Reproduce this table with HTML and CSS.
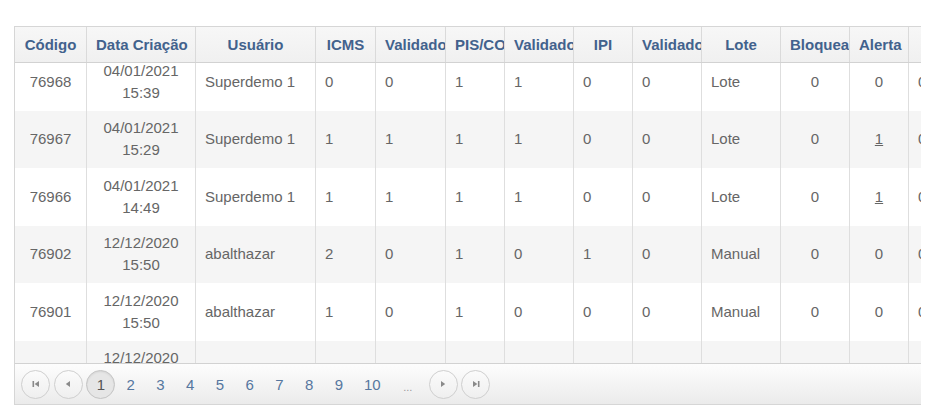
FILE: index.html
```html
<!DOCTYPE html>
<html lang="pt-BR">
<head>
<meta charset="utf-8">
<title>Grid</title>
<link rel="stylesheet" href="styles.css">
</head>
<body>
<div class="grid">
  <div class="grid-header">
    <table class="tbl">
      <colgroup>
        <col class="c1"><col class="c2"><col class="c3"><col class="c4"><col class="c5"><col class="c6"><col class="c7"><col class="c8"><col class="c9"><col class="c10"><col class="c11"><col class="c12"><col class="c13">
      </colgroup>
      <thead>
        <tr>
          <th>Código</th><th>Data Criação</th><th>Usuário</th><th>ICMS</th><th>Validado</th><th>PIS/COFINS</th><th>Validado</th><th>IPI</th><th>Validado</th><th>Lote</th><th>Bloqueado</th><th>Alerta</th><th></th>
        </tr>
      </thead>
    </table>
  </div>
  <div class="grid-content">
    <table class="tbl body">
      <colgroup>
        <col class="c1"><col class="c2"><col class="c3"><col class="c4"><col class="c5"><col class="c6"><col class="c7"><col class="c8"><col class="c9"><col class="c10"><col class="c11"><col class="c12"><col class="c13">
      </colgroup>
      <tbody>
        <tr>
          <td class="ctr">76968</td><td class="ctr">04/01/2021<br>15:39</td><td>Superdemo 1</td><td>0</td><td>0</td><td>1</td><td>1</td><td>0</td><td>0</td><td>Lote</td><td class="ctr">0</td><td class="ctr">0</td><td>0</td>
        </tr>
        <tr class="alt">
          <td class="ctr">76967</td><td class="ctr">04/01/2021<br>15:29</td><td>Superdemo 1</td><td>1</td><td>1</td><td>1</td><td>1</td><td>0</td><td>0</td><td>Lote</td><td class="ctr">0</td><td class="ctr"><a class="lnk" href="#">1</a></td><td>0</td>
        </tr>
        <tr>
          <td class="ctr">76966</td><td class="ctr">04/01/2021<br>14:49</td><td>Superdemo 1</td><td>1</td><td>1</td><td>1</td><td>1</td><td>0</td><td>0</td><td>Lote</td><td class="ctr">0</td><td class="ctr"><a class="lnk" href="#">1</a></td><td>0</td>
        </tr>
        <tr class="alt">
          <td class="ctr">76902</td><td class="ctr">12/12/2020<br>15:50</td><td>abalthazar</td><td>2</td><td>0</td><td>1</td><td>0</td><td>1</td><td>0</td><td>Manual</td><td class="ctr">0</td><td class="ctr">0</td><td>0</td>
        </tr>
        <tr>
          <td class="ctr">76901</td><td class="ctr">12/12/2020<br>15:50</td><td>abalthazar</td><td>1</td><td>0</td><td>1</td><td>0</td><td>0</td><td>0</td><td>Manual</td><td class="ctr">0</td><td class="ctr">0</td><td>0</td>
        </tr>
        <tr class="alt">
          <td class="ctr">76900</td><td class="ctr">12/12/2020<br>15:49</td><td>abalthazar</td><td>1</td><td>0</td><td>1</td><td>0</td><td>0</td><td>0</td><td>Manual</td><td class="ctr">0</td><td class="ctr">0</td><td>0</td>
        </tr>
      </tbody>
    </table>
  </div>
  <div class="pager">
    <a class="pbtn" href="#" title="Primeira página">
      <svg width="10" height="10" viewBox="0 0 10 10"><rect x="1.5" y="2" width="1.6" height="6" fill="#8a8a8a"/><path d="M8 2 L3.6 5 L8 8 Z" fill="#8a8a8a"/></svg>
    </a>
    <a class="pbtn" href="#" title="Página anterior">
      <svg width="10" height="10" viewBox="0 0 10 10"><path d="M7 2 L2.8 5 L7 8 Z" fill="#8a8a8a"/></svg>
    </a>
    <ul class="pages">
      <li><span class="cur">1</span></li>
      <li><a href="#">2</a></li>
      <li><a href="#">3</a></li>
      <li><a href="#">4</a></li>
      <li><a href="#">5</a></li>
      <li><a href="#">6</a></li>
      <li><a href="#">7</a></li>
      <li><a href="#">8</a></li>
      <li><a href="#">9</a></li>
      <li class="wide"><a href="#">10</a></li>
      <li class="more"><a href="#">...</a></li>
    </ul>
    <a class="pbtn" href="#" title="Próxima página">
      <svg width="10" height="10" viewBox="0 0 10 10"><path d="M3 2 L7.2 5 L3 8 Z" fill="#8a8a8a"/></svg>
    </a>
    <a class="pbtn" href="#" title="Última página">
      <svg width="10" height="10" viewBox="0 0 10 10"><path d="M2 2 L6.4 5 L2 8 Z" fill="#8a8a8a"/><rect x="6.9" y="2" width="1.6" height="6" fill="#8a8a8a"/></svg>
    </a>
  </div>
</div>
</body>
</html>
```
FILE: styles.css
```css
* { box-sizing: border-box; }

html, body {
  margin: 0;
  padding: 0;
  background: #ffffff;
}

body {
  padding: 26px 14px 0 14px;
  font-family: "Liberation Sans", Arial, sans-serif;
  font-size: 15px;
  color: #666666;
}

.grid {
  width: 907px;
  border: 1px solid #d6d6d6;
  border-right: none;
  background: #ffffff;
  overflow: hidden;
}

.grid-header {
  overflow: hidden;
  background: linear-gradient(#f7f7f7, #f0f0f0);
  border-bottom: 1px solid #d2d2d2;
}

.tbl {
  table-layout: fixed;
  border-collapse: separate;
  border-spacing: 0;
  width: 963px;
}

.c1 { width: 71px; }
.c2 { width: 109px; }
.c3 { width: 120px; }
.c4 { width: 60px; }
.c5 { width: 70px; }
.c6 { width: 59px; }
.c7 { width: 69px; }
.c8 { width: 59px; }
.c9 { width: 69px; }
.c10 { width: 79px; }
.c11 { width: 69px; }
.c12 { width: 59px; }
.c13 { width: 70px; }

.tbl th {
  height: 35px;
  padding: 0 9px;
  line-height: 35px;
  font-weight: bold;
  color: #42628d;
  text-align: center;
  white-space: nowrap;
  overflow: hidden;
  border-left: 1px solid #dadada;
}

.tbl th:first-child,
.tbl td:first-child {
  border-left: none;
}

.grid-content {
  height: 300px;
  overflow: hidden;
}

.body {
  margin-top: -10px;
}

.body td {
  padding: 6.75px 9px;
  line-height: 22px;
  vertical-align: middle;
  white-space: nowrap;
  overflow: hidden;
  border-left: 1px solid #dedede;
  color: #666666;
}

.body tr.alt td {
  background: #f5f5f5;
}

.body td.ctr {
  text-align: center;
}

.lnk {
  color: #666666;
  text-decoration: underline;
}

.pager {
  height: 41px;
  border-top: 1px solid #d2d2d2;
  background: linear-gradient(#fdfdfd, #ebebeb);
  display: flex;
  align-items: center;
  padding-left: 6px;
}

.pbtn {
  width: 29px;
  height: 29px;
  border: 1px solid #cfcfcf;
  border-radius: 50%;
  background: linear-gradient(#fbfbfb, #efefef);
  display: flex;
  align-items: center;
  justify-content: center;
  margin-right: 3.5px;
}

.pages {
  list-style: none;
  margin: 0;
  padding: 0;
  display: flex;
  align-items: center;
}

.pages li {
  width: 29.75px;
  height: 29px;
  display: flex;
  align-items: center;
  justify-content: center;
}

.pages li.wide {
  width: 37px;
}

.pages li.more {
  width: 34px;
  margin-right: 4px;
}

.pages a {
  color: #56779f;
  text-decoration: none;
  font-size: 15px;
}

.pages li.more a {
  color: #999999;
  font-size: 11px;
  padding-top: 6px;
}

.pages .cur {
  width: 29px;
  height: 29px;
  border-radius: 50%;
  border: 1px solid #c4c4c4;
  background: #e6e6e6;
  box-shadow: inset 0 1px 2px rgba(0,0,0,0.08);
  color: #555555;
  display: flex;
  align-items: center;
  justify-content: center;
}
```
